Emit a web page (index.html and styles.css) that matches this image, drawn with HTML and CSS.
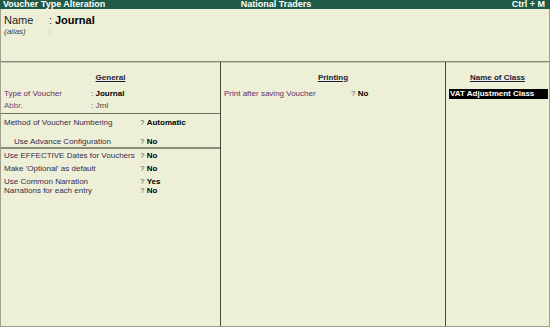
FILE: index.html
```html
<!DOCTYPE html>
<html>
<head>
<meta charset="utf-8">
<link rel="stylesheet" href="styles.css">
</head>
<body>
<div class="titlebar">
  <span class="t-left">Voucher Type Alteration</span>
  <span class="t-mid">National Traders</span>
  <span class="t-right">Ctrl + M</span>
</div>
<div class="frame">
  <div class="head">
    <div class="nrow"><span class="nlabel">Name</span><span class="ncolon">:</span><span class="nval">Journal</span></div>
    <div class="arow"><span class="alabel">(alias)</span><span class="acolon">:</span></div>
  </div>
  <div class="cols">
    <div class="col col1">
      <div class="colhead">General</div>
      <div class="kv p1"><span class="lab purple">Type of Voucher</span><span class="val">: <b>Journal</b></span></div>
      <div class="kv p2"><span class="lab purple2">Abbr.</span><span class="val">: Jrnl</span></div>
      <div class="sec sec2">
        <div class="q"><span class="qlab">Method of Voucher Numbering</span><span class="qv">? <b>Automatic</b></span></div>
        <div class="q q-adv"><span class="qlab indent">Use Advance Configuration</span><span class="qv">? <b>No</b></span></div>
      </div>
      <div class="sec sec3">
        <div class="q"><span class="qlab">Use EFFECTIVE Dates for Vouchers</span><span class="qv">? <b>No</b></span></div>
        <div class="q"><span class="qlab">Make 'Optional' as default</span><span class="qv">? <b>No</b></span></div>
        <div class="q tight"><span class="qlab">Use Common Narration</span><span class="qv">? <b>Yes</b></span></div>
        <div class="q"><span class="qlab">Narrations for each entry</span><span class="qv">? <b>No</b></span></div>
      </div>
    </div>
    <div class="col col2">
      <div class="colhead">Printing</div>
      <div class="q prow"><span class="plab">Print after saving Voucher</span><span class="pv">? <b>No</b></span></div>
    </div>
    <div class="col col3">
      <div class="colhead">Name of Class</div>
      <div class="sel">VAT Adjustment Class</div>
    </div>
  </div>
</div>
</body>
</html>
```

FILE: styles.css
```css
html, body {
  margin: 0;
  padding: 0;
}
body {
  width: 550px;
  height: 327px;
  background: #edf0d6;
  font-family: "Liberation Sans", Arial, sans-serif;
  font-size: 8px;
  color: #1a1a2a;
  overflow: hidden;
}
.titlebar {
  height: 9px;
  background: #1e5a46;
  color: #ffffff;
  font-weight: bold;
  font-size: 9px;
  line-height: 9px;
  display: grid;
  grid-template-columns: 1fr auto 1fr;
  padding: 0 5px 0 3px;
}
.t-mid { text-align: center; padding-left: 4px; }
.t-right { text-align: right; }
.frame {
  height: 318px;
  border-left: 1px solid #9fa28e;
  border-right: 1px solid #9fa28e;
  border-bottom: 1px solid #9fa28e;
  display: flex;
  flex-direction: column;
  box-sizing: border-box;
}
.head {
  height: 52px;
  padding: 5px 0 0 3px;
  box-sizing: border-box;
}
.nrow {
  font-size: 11px;
  line-height: 13px;
  display: flex;
}
.nlabel { width: 45px; color: #1a1a2a; }
.ncolon { width: 6px; }
.nval { font-weight: bold; color: #000; }
.arow {
  font-size: 8px;
  line-height: 9px;
  display: flex;
  color: #3a3a4a;
}
.alabel { width: 45px; font-style: italic; }
.acolon { color: #888; }
.cols {
  flex: 1;
  display: grid;
  grid-template-columns: 220px 225px 1fr;
  border-top: 1px solid #888a78;
  box-shadow: inset 0 1px 0 #c9cbb5;
}
.col {
  border-right: 1px solid #4a4c3e;
  padding-top: 11px;
}
.col3 { border-right: none; }
.colhead {
  text-align: center;
  font-weight: bold;
  text-decoration: underline;
  color: #1a1a3a;
  line-height: 10px;
  height: 16px;
}
.kv {
  display: flex;
  line-height: 9px;
  padding-left: 3px;
}
.p1 { height: 12px; }
.p2 { height: 12px; }
.lab { width: 87px; }
.purple { color: #6a2a6a; }
.purple2 { color: #7a4a7a; }
.val { color: #444; }
.val b { color: #000; }
.sec {
  border-top: 1px solid #6e705e;
  padding-top: 4px;
}
.sec3 {
  border-top: 2px solid #8a8c78;
  padding-top: 2px;
}
.q {
  display: flex;
  line-height: 9px;
  height: 13px;
  padding-left: 3px;
  color: #3a2a4a;
}
.q.tight { height: 9px; }
.q-adv { height: 10px; margin-top: 6px; }
.qlab { width: 136px; }
.qlab.indent { padding-left: 10px; width: 126px; }
.qv { color: #555; }
.qv b { color: #000; }
.prow { padding-left: 3px; height: 10px; }
.plab { width: 127px; color: #6a2a6a; }
.pv { color: #555; }
.pv b { color: #000; }
.sel {
  margin: 0 1px 0 3px;
  background: #000;
  color: #fff;
  font-weight: bold;
  line-height: 10px;
  padding-left: 1px;
}
```
